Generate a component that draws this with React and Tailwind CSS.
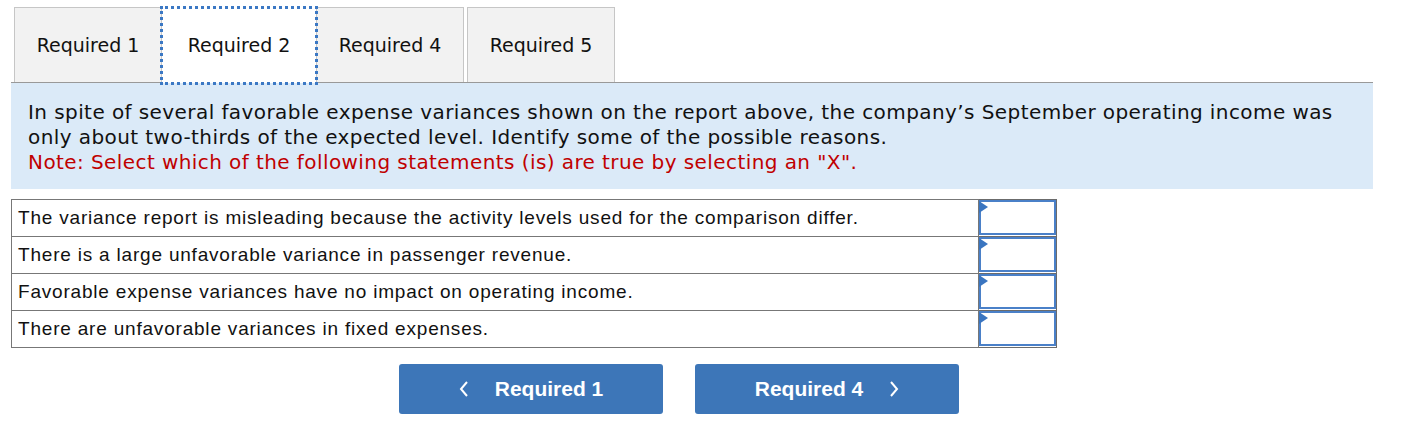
import React from "react";

const tabs = ["Required 1", "Required 2", "Required 4", "Required 5"];

const statements = [
  "The variance report is misleading because the activity levels used for the comparison differ.",
  "There is a large unfavorable variance in passenger revenue.",
  "Favorable expense variances have no impact on operating income.",
  "There are unfavorable variances in fixed expenses.",
];

const Tab = ({ label, active, last }) => {
  if (active) {
    return (
      <div className="w-[154px] h-[75px] bg-white flex items-center justify-center outline-dotted outline-[3px] outline-[#3b78c4] -outline-offset-[1px] z-10 relative -mb-px">
        {label}
      </div>
    );
  }
  return (
    <div
      className={`w-[148px] h-[75px] bg-[#f2f2f2] border border-b-0 border-[#c6c6c6] flex items-center justify-center ${last ? "ml-[3px]" : ""}`}
    >
      {label}
    </div>
  );
};

const Chevron = ({ dir }) => (
  <svg width="10" height="16" viewBox="0 0 10 16" fill="none">
    <polyline
      points={dir === "left" ? "8,1 2,8 8,15" : "2,1 8,8 2,15"}
      stroke="white"
      strokeWidth="2"
      strokeLinejoin="miter"
    />
  </svg>
);

export default function App() {
  return (
    <div className="w-[1401px] h-[443px] bg-white pt-[7px] pl-[11px]">
      {/* Tabs */}
      <div
        className="flex items-end ml-[3px] text-[19px] text-[#111]"
        style={{ fontFamily: '"DejaVu Sans", Verdana, sans-serif' }}
      >
        {tabs.map((t, i) => (
          <Tab key={t} label={t} active={i === 1} last={i === 3} />
        ))}
      </div>

      {/* Question box */}
      <div className="w-[1362px] border-t border-[#999] bg-[#dbeaf8] pt-[17px] pb-[14px] px-[17px]">
        <p
          className="text-[20px] leading-[25px] tracking-[0.42px] text-[#111]"
          style={{ fontFamily: '"DejaVu Sans", Verdana, sans-serif' }}
        >
          In spite of several favorable expense variances shown on the report above, the company’s September operating income was
          <br />
          only about two-thirds of the expected level. Identify some of the possible reasons.
          <br />
          <span className="text-[#c00000]">
            Note: Select which of the following statements (is) are true by selecting an "X".
          </span>
        </p>
      </div>

      {/* Statements table */}
      <table
        className="mt-[10px] border-collapse text-[19px] tracking-[0.8px] text-[#111]"
        style={{ fontFamily: '"Liberation Sans", Arial, sans-serif' }}
      >
        <tbody>
          {statements.map((s) => (
            <tr key={s} className="h-[37px]">
              <td className="w-[967px] border border-[#777] pl-[6px] align-middle">{s}</td>
              <td className="w-[78px] border border-[#6b6b6b] p-0 align-top">
                <div className="relative h-[35px] border-2 border-[#4a80c8] bg-white">
                  <div className="absolute -left-[2px] -top-px w-0 h-0 border-t-[6px] border-b-[6px] border-l-[9px] border-t-transparent border-b-transparent border-l-[#3a75c0]" />
                </div>
              </td>
            </tr>
          ))}
        </tbody>
      </table>

      {/* Navigation buttons */}
      <div
        className="flex gap-[32px] pl-[388px] mt-[16px] text-[21px] font-bold text-white"
        style={{ fontFamily: '"Liberation Sans", Arial, sans-serif' }}
      >
        <div className="w-[264px] h-[50px] bg-[#3d76b8] rounded-[3px] flex items-center justify-center gap-[26px]">
          <Chevron dir="left" />
          <span>Required 1</span>
        </div>
        <div className="w-[264px] h-[50px] bg-[#3d76b8] rounded-[3px] flex items-center justify-center gap-[26px]">
          <span>Required 4</span>
          <Chevron dir="right" />
        </div>
      </div>
    </div>
  );
}
